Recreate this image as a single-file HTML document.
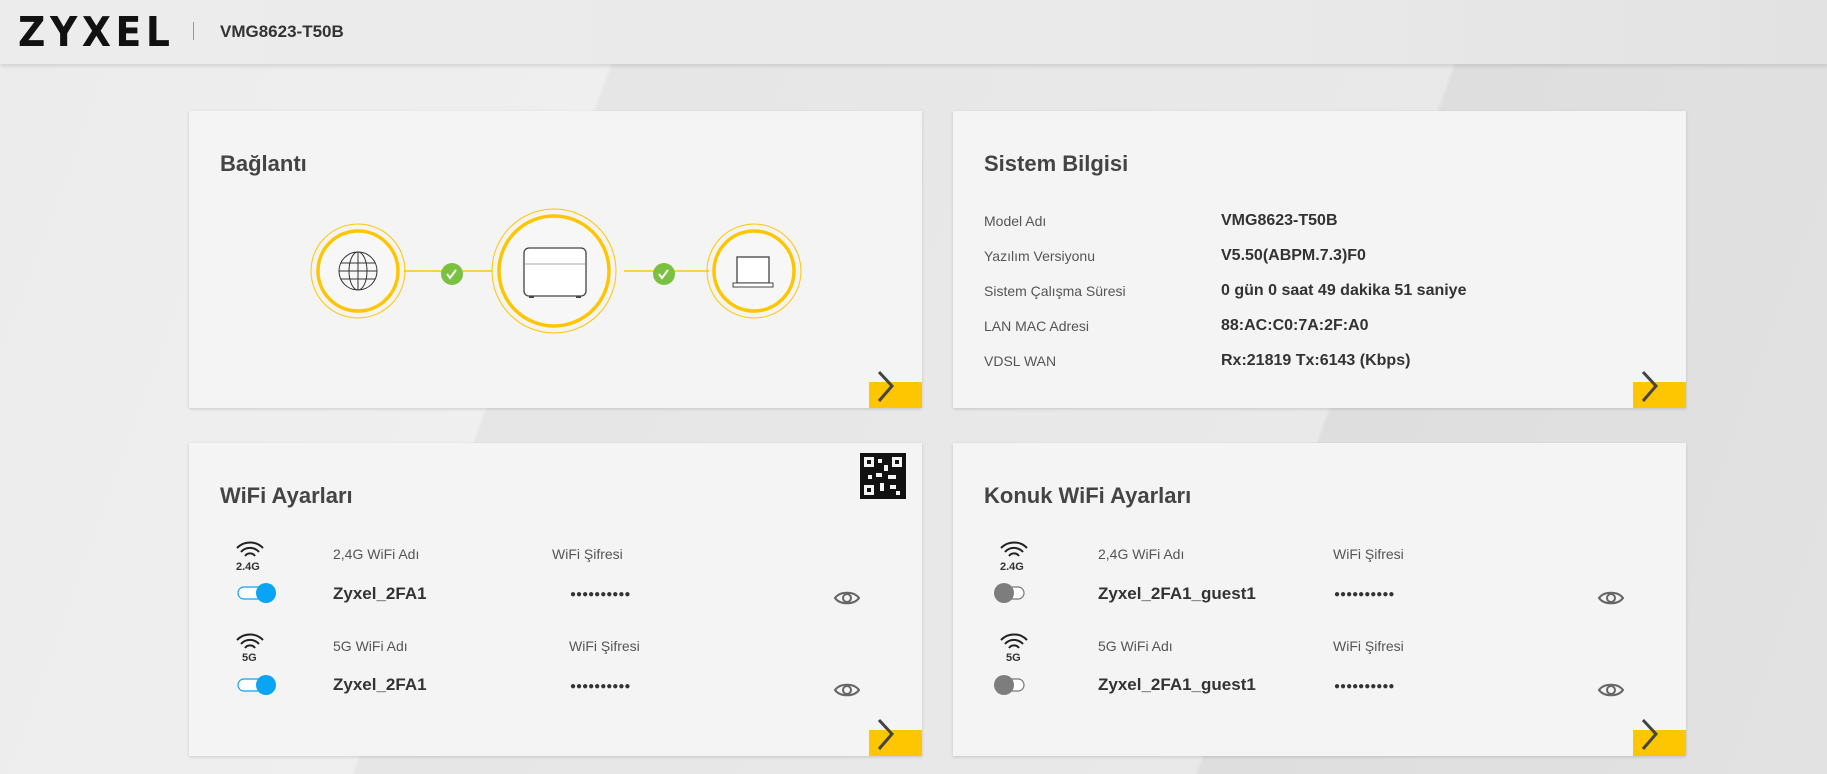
<!DOCTYPE html>
<html><head><meta charset="utf-8"><style>
*{margin:0;padding:0;box-sizing:border-box}
body{width:1827px;height:774px;overflow:hidden;position:relative;font-family:"Liberation Sans",sans-serif;color:#444;background:#e8e8e8}
.bg{position:absolute;inset:0;background:linear-gradient(110deg,#ececec 0%,#efefef 30%,#e6e6e6 30.2%,#e9e9e9 70%,#dedede 70.2%,#e2e2e2 100%)}
.hdr{position:absolute;left:0;top:0;width:1827px;height:64px;background:linear-gradient(90deg,#ececec,#e9e9e9 70%,#e2e2e2);box-shadow:0 2px 4px rgba(0,0,0,.12)}
.logo{position:absolute;left:18px;top:11px;font-size:41px;font-weight:bold;letter-spacing:5px;color:#111;font-family:"DejaVu Sans","Liberation Sans",sans-serif;line-height:42px;transform:scaleX(.92);transform-origin:left}
.sep{position:absolute;left:193px;top:22px;width:1px;height:18px;background:#999}
.model{position:absolute;left:220px;top:22px;font-size:17px;font-weight:bold;color:#333}
.card{position:absolute;background:#f4f4f4;box-shadow:0 1px 3px rgba(0,0,0,.15)}
.card h2{position:absolute;left:31px;top:40px;font-size:22px;font-weight:bold;color:#444}
.go{position:absolute;right:0;bottom:0;width:53px;height:26px;background:#fec600}
.go svg{position:absolute;left:7px;top:-12px}
.t{position:absolute;font-size:14px;color:#555;white-space:nowrap}
.v{position:absolute;font-size:16px;font-weight:bold;color:#333;white-space:nowrap}
.n{position:absolute;font-size:17px;font-weight:bold;color:#333}
.d{position:absolute;font-size:13px;font-weight:bold;letter-spacing:0;color:#333}
.dt{position:absolute;font-size:10px;letter-spacing:0;color:#333}
</style></head><body>
<div class="bg"></div>
<div class="hdr"><div class="logo">ZYXEL</div><div class="sep"></div><div class="model">VMG8623-T50B</div></div>

<div class="card" style="left:189px;top:111px;width:733px;height:297px">
<h2>Bağlantı</h2>
<svg style="position:absolute;left:0;top:0" width="733" height="297">
<line x1="215" y1="160" x2="303" y2="160" stroke="#fec600" stroke-width="1.5"/>
<line x1="435" y1="160" x2="520" y2="160" stroke="#fec600" stroke-width="1.5"/>
<circle cx="169" cy="160" r="47" fill="none" stroke="#fec600" stroke-width="1"/>
<circle cx="169" cy="160" r="40" fill="#f7f7f7" stroke="#fec600" stroke-width="3.5"/>
<circle cx="365" cy="160" r="62" fill="none" stroke="#fec600" stroke-width="1"/>
<circle cx="365" cy="160" r="55" fill="#f7f7f7" stroke="#fec600" stroke-width="3.5"/>
<circle cx="565" cy="160" r="47" fill="none" stroke="#fec600" stroke-width="1"/>
<circle cx="565" cy="160" r="40" fill="#f7f7f7" stroke="#fec600" stroke-width="3.5"/>
<g fill="none" stroke="#333" stroke-width="1"><circle cx="169" cy="160" r="19"/><ellipse cx="169" cy="160" rx="9" ry="19"/><line x1="169" y1="141" x2="169" y2="179"/><line x1="150" y1="160" x2="188" y2="160"/><line x1="152" y1="152" x2="186" y2="152"/><line x1="152" y1="168" x2="186" y2="168"/></g>
<rect x="335" y="137" width="62" height="48" rx="5" fill="#fff" stroke="#444" stroke-width="1.3"/><line x1="335" y1="153" x2="397" y2="153" stroke="#888" stroke-width=".7"/><rect x="340" y="185" width="5" height="2" fill="#444"/><rect x="387" y="185" width="5" height="2" fill="#444"/>
<rect x="548" y="146" width="32" height="26" fill="#fff" stroke="#444" stroke-width="1.3"/><rect x="544" y="172" width="40" height="4" fill="#fff" stroke="#444"/>
<circle cx="263" cy="163" r="11" fill="#7ac142"/><path d="M258 163l3 4 6-8" stroke="#fff" stroke-width="2" fill="none"/>
<circle cx="475" cy="163" r="11" fill="#7ac142"/><path d="M470 163l3 4 6-8" stroke="#fff" stroke-width="2" fill="none"/>
</svg>
<div class="go"><svg width="20" height="34"><path d="M3 2l13 14-13 15" stroke="#444" stroke-width="3" fill="none"/></svg></div>
</div>

<div class="card" style="left:953px;top:111px;width:733px;height:297px">
<h2>Sistem Bilgisi</h2>
<div class="t" style="left:31px;top:102px">Model Adı</div><div class="v" style="left:268px;top:101px">VMG8623-T50B</div>
<div class="t" style="left:31px;top:137px">Yazılım Versiyonu</div><div class="v" style="left:268px;top:136px">V5.50(ABPM.7.3)F0</div>
<div class="t" style="left:31px;top:172px">Sistem Çalışma Süresi</div><div class="v" style="left:268px;top:171px">0 gün 0 saat 49 dakika 51 saniye</div>
<div class="t" style="left:31px;top:207px">LAN MAC Adresi</div><div class="v" style="left:268px;top:206px">88:AC:C0:7A:2F:A0</div>
<div class="t" style="left:31px;top:242px">VDSL WAN</div><div class="v" style="left:268px;top:241px">Rx:21819 Tx:6143 (Kbps)</div>
<div class="go"><svg width="20" height="34"><path d="M3 2l13 14-13 15" stroke="#444" stroke-width="3" fill="none"/></svg></div>
</div>

<div class="card" style="left:189px;top:443px;width:733px;height:313px">
<h2>WiFi Ayarları</h2>
<svg style="position:absolute;left:671px;top:10px" width="46" height="46"><rect width="46" height="46" fill="#111"/><g fill="#f4f4f4"><rect x="4" y="4" width="10" height="10"/><rect x="32" y="4" width="10" height="10"/><rect x="4" y="32" width="10" height="10"/><rect x="18" y="6" width="4" height="4"/><rect x="24" y="12" width="4" height="6"/><rect x="16" y="20" width="6" height="4"/><rect x="28" y="22" width="8" height="4"/><rect x="20" y="30" width="4" height="8"/><rect x="30" y="32" width="6" height="4"/><rect x="36" y="38" width="4" height="4"/><rect x="8" y="22" width="4" height="4"/></g><g fill="#111"><rect x="7" y="7" width="4" height="4"/><rect x="35" y="7" width="4" height="4"/><rect x="7" y="35" width="4" height="4"/></g></svg>
<div class="go"><svg width="20" height="34"><path d="M3 2l13 14-13 15" stroke="#444" stroke-width="3" fill="none"/></svg></div>
</div>

<div class="card" style="left:953px;top:443px;width:733px;height:313px">
<h2>Konuk WiFi Ayarları</h2>
<div class="go"><svg width="20" height="34"><path d="M3 2l13 14-13 15" stroke="#444" stroke-width="3" fill="none"/></svg></div>
</div>

<div style="position:absolute;left:0;top:0">
<svg style="position:absolute;left:235px;top:541px" width="30" height="18"><g fill="none" stroke="#222" stroke-width="2"><path d="M2 7a18 18 0 0 1 26 0"/><path d="M6 11a12 12 0 0 1 18 0"/><path d="M10 15a6 6 0 0 1 10 0"/></g></svg>
<div class="d" style="left:236px;top:561px;font-size:11px">2.4G</div>
<svg style="position:absolute;left:236px;top:582px" width="44" height="22"><rect x="2" y="5" width="34" height="12" rx="6" fill="#fff" stroke="#0aa4f5" stroke-width="1.2"/><circle cx="30" cy="11" r="10" fill="#0aa4f5"/></svg>
<div class="t" style="left:333px;top:546px">2,4G WiFi Adı</div>
<div class="t" style="left:552px;top:546px">WiFi Şifresi</div>
<div class="n" style="left:333px;top:584px">Zyxel_2FA1</div>
<div class="dt" style="left:570px;top:589px">●●●●●●●●●●</div>
<svg style="position:absolute;left:833px;top:588px" width="28" height="20"><path d="M2 10C7 3 21 3 26 10C21 17 7 17 2 10Z" fill="none" stroke="#666" stroke-width="2"/><circle cx="14" cy="10" r="4" fill="none" stroke="#666" stroke-width="2"/></svg>

<svg style="position:absolute;left:235px;top:633px" width="30" height="18"><g fill="none" stroke="#222" stroke-width="2"><path d="M2 7a18 18 0 0 1 26 0"/><path d="M6 11a12 12 0 0 1 18 0"/><path d="M10 15a6 6 0 0 1 10 0"/></g></svg>
<div class="d" style="left:242px;top:652px;font-size:11px">5G</div>
<svg style="position:absolute;left:236px;top:674px" width="44" height="22"><rect x="2" y="5" width="34" height="12" rx="6" fill="#fff" stroke="#0aa4f5" stroke-width="1.2"/><circle cx="30" cy="11" r="10" fill="#0aa4f5"/></svg>
<div class="t" style="left:333px;top:638px">5G WiFi Adı</div>
<div class="t" style="left:569px;top:638px">WiFi Şifresi</div>
<div class="n" style="left:333px;top:675px">Zyxel_2FA1</div>
<div class="dt" style="left:570px;top:681px">●●●●●●●●●●</div>
<svg style="position:absolute;left:833px;top:680px" width="28" height="20"><path d="M2 10C7 3 21 3 26 10C21 17 7 17 2 10Z" fill="none" stroke="#666" stroke-width="2"/><circle cx="14" cy="10" r="4" fill="none" stroke="#666" stroke-width="2"/></svg>

<svg style="position:absolute;left:999px;top:541px" width="30" height="18"><g fill="none" stroke="#222" stroke-width="2"><path d="M2 7a18 18 0 0 1 26 0"/><path d="M6 11a12 12 0 0 1 18 0"/><path d="M10 15a6 6 0 0 1 10 0"/></g></svg>
<div class="d" style="left:1000px;top:561px;font-size:11px">2.4G</div>
<svg style="position:absolute;left:992px;top:582px" width="44" height="22"><rect x="8" y="5" width="24" height="12" rx="6" fill="#fff" stroke="#777" stroke-width="1.2"/><circle cx="12" cy="11" r="10" fill="#7d7d7d"/></svg>
<div class="t" style="left:1098px;top:546px">2,4G WiFi Adı</div>
<div class="t" style="left:1333px;top:546px">WiFi Şifresi</div>
<div class="n" style="left:1098px;top:584px">Zyxel_2FA1_guest1</div>
<div class="dt" style="left:1334px;top:589px">●●●●●●●●●●</div>
<svg style="position:absolute;left:1597px;top:588px" width="28" height="20"><path d="M2 10C7 3 21 3 26 10C21 17 7 17 2 10Z" fill="none" stroke="#666" stroke-width="2"/><circle cx="14" cy="10" r="4" fill="none" stroke="#666" stroke-width="2"/></svg>

<svg style="position:absolute;left:999px;top:633px" width="30" height="18"><g fill="none" stroke="#222" stroke-width="2"><path d="M2 7a18 18 0 0 1 26 0"/><path d="M6 11a12 12 0 0 1 18 0"/><path d="M10 15a6 6 0 0 1 10 0"/></g></svg>
<div class="d" style="left:1006px;top:652px;font-size:11px">5G</div>
<svg style="position:absolute;left:992px;top:674px" width="44" height="22"><rect x="8" y="5" width="24" height="12" rx="6" fill="#fff" stroke="#777" stroke-width="1.2"/><circle cx="12" cy="11" r="10" fill="#7d7d7d"/></svg>
<div class="t" style="left:1098px;top:638px">5G WiFi Adı</div>
<div class="t" style="left:1333px;top:638px">WiFi Şifresi</div>
<div class="n" style="left:1098px;top:675px">Zyxel_2FA1_guest1</div>
<div class="dt" style="left:1334px;top:681px">●●●●●●●●●●</div>
<svg style="position:absolute;left:1597px;top:680px" width="28" height="20"><path d="M2 10C7 3 21 3 26 10C21 17 7 17 2 10Z" fill="none" stroke="#666" stroke-width="2"/><circle cx="14" cy="10" r="4" fill="none" stroke="#666" stroke-width="2"/></svg>
</div>
</body></html>
